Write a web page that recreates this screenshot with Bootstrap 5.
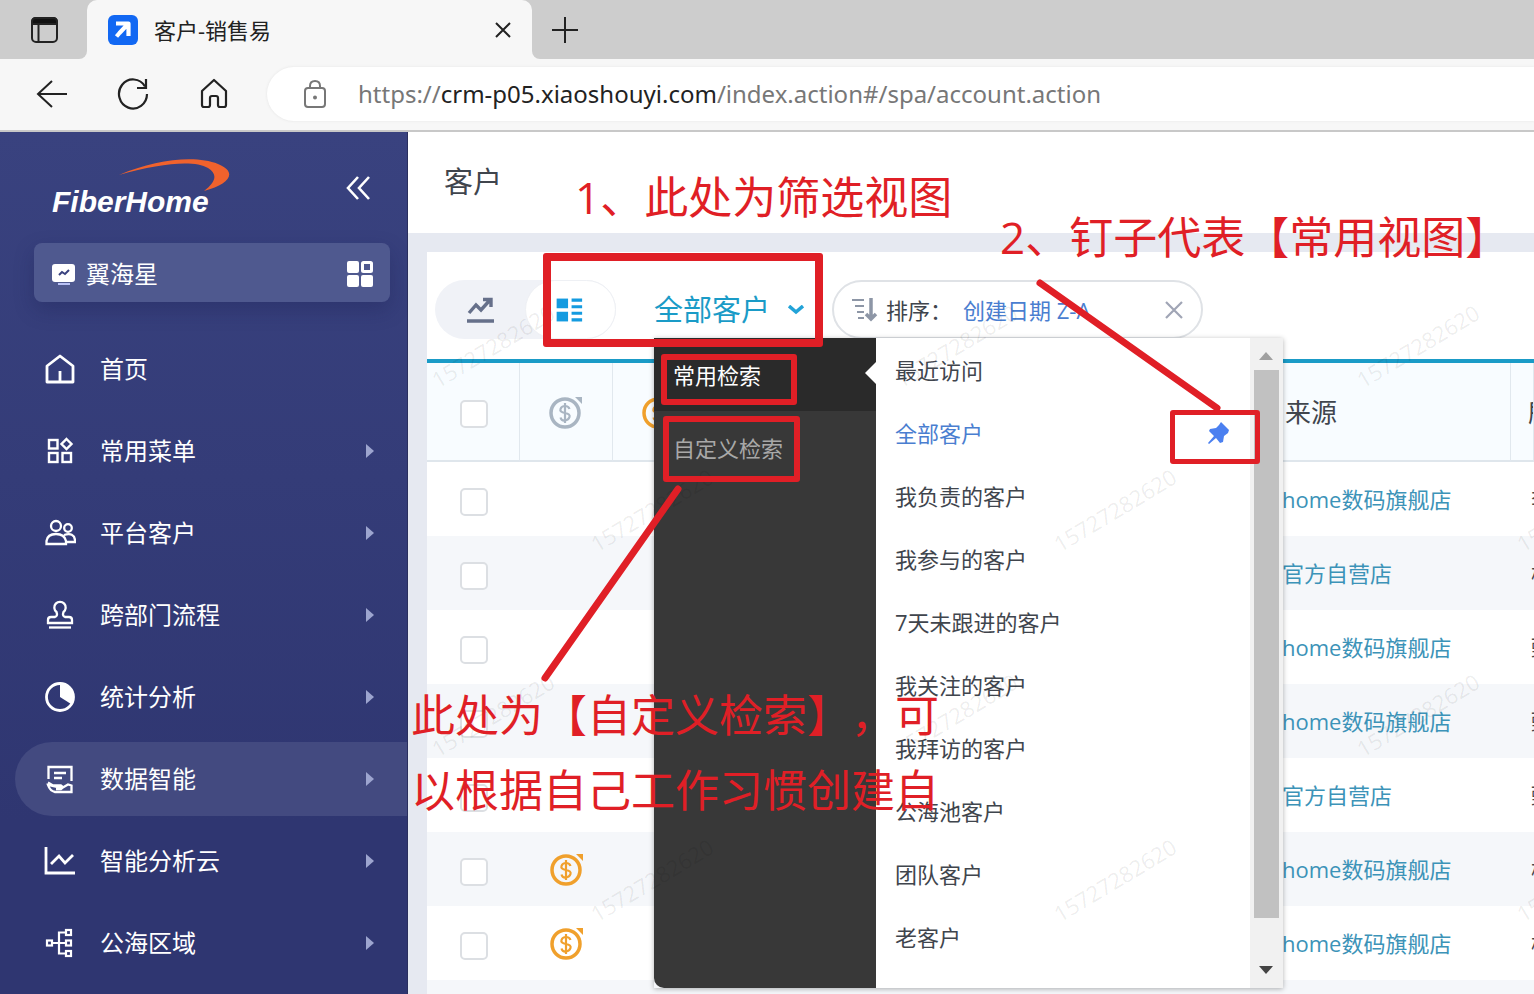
<!DOCTYPE html>
<html lang="zh-CN">
<head>
<meta charset="utf-8">
<meta name="viewport" content="width=device-width, initial-scale=1">
<title>客户-销售易</title>
<link href="https://cdn.jsdelivr.net/npm/bootstrap@5.3.0/dist/css/bootstrap.min.css" rel="stylesheet">
<style>
:root{--red:#e01f26;--teal:#1a9bc7;--ink:#40454d}
body{font-family:"Open Sans","Noto Sans CJK SC",sans-serif;font-size:22px;line-height:32px;color:var(--ink);background:#f7f7f7}
svg{display:block;flex:none}
.icon-btn{border:0;background:none;padding:0;color:#222}
/* browser frame */
.tabstrip{height:59px;background:#f7f7f7}
.tab-side{width:87px;background:#cdcdcd;border-bottom-right-radius:8px}
.tab-rest{background:#cdcdcd;border-bottom-left-radius:8px;padding-left:20px}
.tab-holder{background:#cdcdcd linear-gradient(#cdcdcd 50%,#f7f7f7 50%)}
.tab-page{width:445px;background:#f7f7f7;border-radius:10px 10px 0 0;padding:0 20px;height:59px;color:#222}
.addressbar{height:73px;padding:8px 0 9px 35px;background:#f7f7f7;border-bottom:2px solid #c8c8c8}
.nav-tools{gap:48px;width:232px}
.url-pill{background:#fff;border-radius:28px 0 0 28px;box-shadow:0 0 3px #e4e4e4;padding-left:35px;gap:30px}
.url-text{font-family:"Noto Sans",sans-serif;font-size:24px;color:#777;white-space:nowrap}
.url-text b{font-weight:400;color:#222}
/* sidebar */
.sidebar{width:408px;background:linear-gradient(#39427f,#2f3671 80%);color:#fff;border-right:1px solid #2a2f5e}
.brand-row{height:111px;padding:20px 36px 0 52px}
.brand-name{font:italic bold 30px/40px "Liberation Sans Narrow","Liberation Sans",sans-serif;color:#fff;padding-top:30px}
.brand-arc{position:absolute;left:64px;top:4px}
.app-switch{margin:0 17px 0 34px;height:59px;border-radius:8px;background:#4f598f;box-shadow:0 8px 20px rgba(20,25,70,.25);padding:2px 16px 0 18px;font-size:24px;gap:10px}
.side-nav{margin-top:30px;padding-left:15px;gap:8px}
.side-nav a{height:74px;border-radius:37px 0 0 37px;padding:0 33px 0 29px;gap:24px;font-size:24px;color:#fff;text-decoration:none}
.side-nav a.active{background:#434a80}
.side-nav .caret{margin-left:auto}
/* content */
.content-area{background:#e6e9f1}
.page-head{height:101px;background:#fff;padding:0 36px}
.page-head h1{font-size:29px;font-weight:400;margin:0;line-height:100px}
.panel{margin:19px 0 0 19px;background:#fff}
.tools{height:107px;padding:28px 8px 20px}
.view-toggle{height:59px;width:181px;border-radius:30px;background:#f0f2f7}
.view-toggle button{width:90px}
.view-toggle .on{background:#fff;border:1px solid #eef0f4;border-radius:30px;width:91px}
.view-name{font-size:29px;color:var(--teal);margin-left:38px;gap:14px;width:178px}
.sort-pill{height:59px;border:2px solid #dfe2e6;border-radius:30px;width:371px;padding:0 18px;white-space:nowrap}
.sort-pill .key{color:#4a7ed0;margin-left:11px}
.grid-table{table-layout:fixed;width:100%;border-top:4px solid var(--teal);border-collapse:separate;border-spacing:0;margin:0}
.grid-table th{height:99px;background:#f8fcff;border-bottom:2px solid #dfe6ec;border-right:1px solid #e1e8ee;font-weight:400;font-size:26px;padding:0;white-space:nowrap;overflow:hidden}
.grid-table td{height:74px;padding:0;white-space:nowrap;overflow:hidden}
.grid-table tbody tr:nth-child(even){background:#f5f7fa}
.grid-table th.src{padding-left:18px}
.grid-table td.src{padding-left:15px}
.grid-table .src a{color:#3c93b8;text-decoration:none}
.grid-table th.own{padding-left:17px}
.grid-table td.own{padding-left:20px}
.grid-table svg{margin:0 auto}
.grid-table .form-check-input{width:28px;height:28px;margin:0 0 0 1px;border:2px solid #dcdfe3;border-radius:5px;display:inline-block;vertical-align:middle;background-color:#fff}
/* view menu */
.view-menu{position:absolute;left:246px;top:206px;width:629px;height:650px;box-shadow:0 1px 5px rgba(0,0,0,.3)}
.menu-kinds{width:222px;background:#383838;border-radius:0 0 0 10px}
.menu-kinds button{height:73px;border:0;background:none;color:#a8a8a8;text-align:left;padding:0 20px 0 19px}
.menu-kinds button.active{background:#2a2a2a;color:#fff}
.menu-kinds .notch{position:absolute;left:211px;top:24px}
.menu-views{background:#fff}
.menu-views a{height:63px;padding:0 20px 0 19px;color:var(--ink);text-decoration:none}
.menu-views a.active{color:#4a7ed0}
.menu-scroll{width:33px;background:#f1f1f1;padding:14px 4px 14px 3px}
.menu-scroll .thumb{background:#c1c1c1;height:548px;width:25px;margin-top:10px}
/* notes over the page */
.marks{position:absolute;left:0;top:0;width:100%;height:100%;pointer-events:none}
.note{position:absolute;color:var(--red);font:400 44px/75px "Open Sans","Noto Sans CJK SC",sans-serif;text-spacing-trim:space-all;font-kerning:none;white-space:nowrap;margin:0}
.frame-mark{position:absolute;border:6px solid var(--red);border-radius:3px;pointer-events:none}
</style>
</head>
<body>
<div class="d-flex flex-column vh-100 overflow-hidden">
  <header>
    <div class="tabstrip d-flex">
      <div class="tab-side d-flex align-items-center justify-content-center">
        <button class="icon-btn" aria-label="标签页操作"><svg width="30" height="30" viewBox="0 0 30 30" fill="none" stroke="#222" stroke-width="2"><rect x="3" y="3" width="25" height="24" rx="4"/><path d="M3 9V7q0-4 4-4h17q4 0 4 4v2z" fill="#111"/><path d="M9.500 9v18"/></svg></button>
      </div>
      <div class="tab-holder">
        <div class="tab-page d-flex align-items-center">
          <svg width="31" height="31" viewBox="0 0 31 31"><rect x="1" y="1" width="30" height="30" rx="6" fill="#1268f3"/><path d="M9 9.500h12.500V22M20.500 10.500l-8 8.500v0l-3 3.500" fill="none" stroke="#fff" stroke-width="4.200" stroke-linejoin="round"/></svg>
          <span class="ms-3">客户-销售易</span>
          <button class="icon-btn ms-auto" aria-label="关闭"><svg width="18" height="18" viewBox="0 0 18 18" stroke="#222" stroke-width="2"><path d="M2 2l14 14M16 2L2 16"/></svg></button>
        </div>
      </div>
      <div class="tab-rest flex-grow-1 d-flex align-items-center">
        <button class="icon-btn" aria-label="新标签页"><svg width="26" height="28" viewBox="0 0 26 28" stroke="#222" stroke-width="2"><path d="M13 1v26M0 14h26"/></svg></button>
      </div>
    </div>
    <div class="addressbar d-flex">
      <div class="nav-tools d-flex align-items-center">
        <button class="icon-btn" aria-label="返回"><svg width="33" height="34" viewBox="0 0 33 34" fill="none" stroke="#222" stroke-width="2"><path d="M17 4L3 17l14 13M3 17h29"/></svg></button>
        <button class="icon-btn" aria-label="刷新"><svg width="34" height="34" viewBox="0 0 34 34" fill="none" stroke="#222" stroke-width="2.200"><path d="M29 9.500A14 14.500 0 1 0 31 17"/><path d="M30 2v9h-9"/></svg></button>
        <button class="icon-btn" aria-label="主页"><svg width="32" height="34" viewBox="0 0 32 34" fill="none" stroke="#222" stroke-width="2.200" stroke-linejoin="round"><path d="M4 14L16 3l12 11v14q0 2-2 2h-4q-2 0-2-2v-7q0-2-2-2h-4q-2 0-2 2v7q0 2-2 2H6q-2 0-2-2z"/></svg></button>
      </div>
      <div class="url-pill d-flex align-items-center flex-grow-1">
        <svg width="26" height="32" viewBox="0 0 26 32" fill="none" stroke="#777" stroke-width="2"><rect x="3" y="10" width="20" height="19" rx="3"/><path d="M8 10V8q0-5 5-5t5 5v2"/><circle cx="13" cy="19.500" r="1" fill="#777"/></svg>
        <div class="url-text">https://<b>crm-p05.xiaoshouyi.com</b>/index.action#/spa/account.action</div>
      </div>
    </div>
  </header>

  <div class="d-flex flex-grow-1 overflow-hidden">
    <aside class="sidebar flex-shrink-0">
      <div class="brand-row d-flex justify-content-between">
        <div class="position-relative">
          <div class="brand-name">FiberHome</div>
          <svg class="brand-arc" width="116" height="40" viewBox="0 0 116 40"><path d="M3 19C40 3 80-1 102 8c20 8 12 20-14 27 12-9 14-17 4-23C78 4 45 7 3 19z" fill="#f0622d"/></svg>
        </div>
        <button class="icon-btn align-self-start mt-4" aria-label="收起菜单"><svg width="26" height="24" viewBox="0 0 26 24" fill="none" stroke="#fff" stroke-width="2.600"><path d="M13 1L3 12l10 11M24 1L14 12l10 11"/></svg></button>
      </div>
      <div class="app-switch d-flex align-items-center">
        <svg width="24" height="24" viewBox="0 0 24 24"><rect x="0" y="2" width="23" height="18" rx="3" fill="#fff"/><rect x="6" y="21" width="12" height="2" fill="#b9c1f5"/><path d="M7 13l3-3 3 2 4-4" fill="none" stroke="#39427f" stroke-width="2"/></svg>
        <span>翼海星</span>
        <button class="icon-btn ms-auto" aria-label="应用"><svg width="28" height="26" viewBox="0 0 28 26" fill="#fff"><rect x="1" y="0" width="12" height="12" rx="2"/><rect x="1" y="14" width="12" height="12" rx="2"/><rect x="15" y="14" width="12" height="12" rx="2"/><rect x="16.500" y="1.500" width="9" height="9" rx="1" fill="none" stroke="#fff" stroke-width="3"/></svg></button>
      </div>
      <nav class="side-nav d-flex flex-column">
        <a href="#" class="d-flex align-items-center"><svg width="32" height="32" viewBox="0 0 32 32" fill="none" stroke="#fff" stroke-width="2.800" stroke-linejoin="round"><path d="M3 13L16 3l13 10v16H3z"/><path d="M16 18v11"/></svg><span>首页</span></a>
        <a href="#" class="d-flex align-items-center"><svg width="32" height="32" viewBox="0 0 32 32" fill="none" stroke="#fff" stroke-width="2.400"><rect x="5" y="5" width="8.500" height="8.500"/><rect x="5" y="18" width="8.500" height="9"/><rect x="18.500" y="18" width="8.500" height="9"/><path d="M22.500 4l5 5-5 5-5-5z"/></svg><span>常用菜单</span><svg class="caret" width="8" height="14" viewBox="0 0 8 14" fill="#9da5cf"><path d="M0 0l8 7-8 7z"/></svg></a>
        <a href="#" class="d-flex align-items-center"><svg width="32" height="32" viewBox="0 0 32 32" fill="none" stroke="#fff" stroke-width="2.300"><circle cx="12" cy="9" r="5"/><circle cx="24" cy="11" r="3.800"/><path d="M2.500 27v-3q1-7 9.500-7t10 7v3zM20 18q10-3 11 5v2h-9"/></svg><span>平台客户</span><svg class="caret" width="8" height="14" viewBox="0 0 8 14" fill="#9da5cf"><path d="M0 0l8 7-8 7z"/></svg></a>
        <a href="#" class="d-flex align-items-center"><svg width="32" height="32" viewBox="0 0 32 32" fill="none" stroke="#fff" stroke-width="2.300"><path d="M4 24v-3q0-3 3-3h4q3-1 1.500-5A5.700 5.700 0 1 1 19.500 13q-1.500 4 1.500 5h4q3 0 3 3v3z"/><path d="M5 28.500h22"/></svg><span>跨部门流程</span><svg class="caret" width="8" height="14" viewBox="0 0 8 14" fill="#9da5cf"><path d="M0 0l8 7-8 7z"/></svg></a>
        <a href="#" class="d-flex align-items-center"><svg width="32" height="32" viewBox="0 0 32 32" fill="none" stroke="#fff" stroke-width="2.800"><circle cx="16" cy="16" r="13.500"/><path d="M16 3v13l11 7q5-9-1-16-4-4-10-4z" fill="#fff" stroke="none"/></svg><span>统计分析</span><svg class="caret" width="8" height="14" viewBox="0 0 8 14" fill="#9da5cf"><path d="M0 0l8 7-8 7z"/></svg></a>
        <a href="#" class="active d-flex align-items-center"><svg width="32" height="32" viewBox="0 0 32 32" fill="none" stroke="#fff" stroke-width="2.300"><path d="M4.500 16V4h23v14M10 10h12M10 15h8"/><path d="M4 19.500l5 3h8q3 1.500 0 3.500h-5M18 25l6-3.500 3.500 1V29H11q-5-1-7-7z"/></svg><span>数据智能</span><svg class="caret" width="8" height="14" viewBox="0 0 8 14" fill="#9da5cf"><path d="M0 0l8 7-8 7z"/></svg></a>
        <a href="#" class="d-flex align-items-center"><svg width="32" height="32" viewBox="0 0 32 32" fill="none" stroke="#fff" stroke-width="2.800"><path d="M2 2v26h29M7 19l8-8 6 7 8-8"/></svg><span>智能分析云</span><svg class="caret" width="8" height="14" viewBox="0 0 8 14" fill="#9da5cf"><path d="M0 0l8 7-8 7z"/></svg></a>
        <a href="#" class="d-flex align-items-center"><svg width="32" height="32" viewBox="0 0 32 32" fill="none" stroke="#fff" stroke-width="2.200"><rect x="3" y="13.500" width="5" height="5"/><rect x="22" y="3" width="5" height="5"/><rect x="22" y="13.500" width="5" height="5"/><rect x="22" y="24" width="5" height="5"/><path d="M8 16h14M22 5.500h-7v21h7"/></svg><span>公海区域</span><svg class="caret" width="8" height="14" viewBox="0 0 8 14" fill="#9da5cf"><path d="M0 0l8 7-8 7z"/></svg></a>
      </nav>
    </aside>

    <main class="content-area flex-grow-1 position-relative overflow-hidden">
      <div class="page-head"><h1>客户</h1></div>
      <section class="panel">
        <div class="tools d-flex">
          <div class="view-toggle d-flex">
            <button class="icon-btn d-flex align-items-center justify-content-center" aria-label="图表视图"><svg width="28" height="26" viewBox="0 0 28 26" fill="none" stroke="#66708a" stroke-width="3.400"><path d="M3 16l7-8 5 5 9-10M17 2.500h8V10M1 24h27"/></svg></button>
            <button class="icon-btn on d-flex align-items-center" aria-label="列表视图"><svg class="ms-4 ps-1" width="33" height="26" viewBox="0 0 33 26" fill="#149be0"><rect x="3" width="13" height="11"/><rect x="3" y="15" width="13" height="11"/><path d="M20 0h12v3.500H20zM20 7.500h12V11H20zM20 15h12v3.500H20zM20 22.500h12V26H20z"/></svg></button>
          </div>
          <button class="icon-btn view-name d-flex align-items-center">全部客户 <svg class="ms-1" width="16" height="10" viewBox="0 0 16 10" fill="none" stroke="#22a3d8" stroke-width="3.500"><path d="M1 1l7 6 7-6"/></svg></button>
          <div class="sort-pill d-flex align-items-center">
            <svg width="26" height="26" viewBox="0 0 26 26" fill="none" stroke="#8d96a6" stroke-width="2"><path d="M0 3h12M3 9h9M5 15h7M6 21h6"/><path d="M19 1v20M14 17l5 5 5-5" stroke-width="3.500"/></svg>
            <span class="ms-2">排序：</span><a href="#" class="key text-decoration-none">创建日期 Z-A</a>
            <button class="icon-btn ms-auto" aria-label="清除排序"><svg width="18" height="18" viewBox="0 0 18 18" stroke="#a0a5b5" stroke-width="2.200"><path d="M1 1l16 16M17 1L1 17"/></svg></button>
          </div>
        </div>
        <table class="grid-table">
          <colgroup><col style="width:93px"><col style="width:93px"><col style="width:93px"><col><col style="width:244px"><col style="width:23px"></colgroup>
          <thead><tr>
            <th class="text-center"><input class="form-check-input" type="checkbox" aria-label="全选"></th>
            <th><svg width="34" height="34" viewBox="0 0 34 34"><use href="#coin" color="#a9b5c2"/></svg></th>
            <th><svg width="34" height="34" viewBox="0 0 34 34"><use href="#coin" color="#f0a02c"/></svg></th>
            <th></th><th class="src">来源</th><th class="own">所</th>
          </tr></thead>
          <tbody>
            <tr><td class="text-center"><input class="form-check-input" type="checkbox" aria-label="选择第1行"></td><td></td><td></td><td></td><td class="src"><a href="#">home数码旗舰店</a></td><td class="own">李</td></tr>
            <tr><td class="text-center"><input class="form-check-input" type="checkbox" aria-label="选择第2行"></td><td></td><td></td><td></td><td class="src"><a href="#">官方自营店</a></td><td class="own">杨</td></tr>
            <tr><td class="text-center"><input class="form-check-input" type="checkbox" aria-label="选择第3行"></td><td></td><td></td><td></td><td class="src"><a href="#">home数码旗舰店</a></td><td class="own">甄</td></tr>
            <tr><td class="text-center"><input class="form-check-input" type="checkbox" aria-label="选择第4行"></td><td></td><td></td><td></td><td class="src"><a href="#">home数码旗舰店</a></td><td class="own">甄</td></tr>
            <tr><td class="text-center"><input class="form-check-input" type="checkbox" aria-label="选择第5行"></td><td></td><td></td><td></td><td class="src"><a href="#">官方自营店</a></td><td class="own">甄</td></tr>
            <tr><td class="text-center"><input class="form-check-input" type="checkbox" aria-label="选择第6行"></td><td><svg width="34" height="34" viewBox="0 0 34 34"><use href="#coin" color="#f0a02c"/></svg></td><td></td><td></td><td class="src"><a href="#">home数码旗舰店</a></td><td class="own">杨</td></tr>
            <tr><td class="text-center"><input class="form-check-input" type="checkbox" aria-label="选择第7行"></td><td><svg width="34" height="34" viewBox="0 0 34 34"><use href="#coin" color="#f0a02c"/></svg></td><td></td><td></td><td class="src"><a href="#">home数码旗舰店</a></td><td class="own">杨</td></tr>
            <tr><td></td><td></td><td></td><td></td><td></td><td></td></tr>
          </tbody>
        </table>
      </section>

      <div class="view-menu d-flex">
        <div class="menu-kinds d-flex flex-column">
          <button class="active">常用检索</button>
          <button>自定义检索</button>
          <svg class="notch" width="11" height="22" viewBox="0 0 11 22"><path d="M11 0L0 11l11 11z" fill="#fff"/></svg>
        </div>
        <nav class="menu-views flex-grow-1">
          <a href="#" class="d-flex align-items-center">最近访问</a>
          <a href="#" class="active d-flex align-items-center justify-content-between">全部客户<svg width="24" height="24" viewBox="0 0 24 24" fill="#4b80f0"><path d="M15 1l8 8-1 3-4 3-1 6-3 1-4-5-7 6-1-1 6-7-5-5 1-2 6-1 3-3z"/></svg></a>
          <a href="#" class="d-flex align-items-center">我负责的客户</a>
          <a href="#" class="d-flex align-items-center">我参与的客户</a>
          <a href="#" class="d-flex align-items-center">7天未跟进的客户</a>
          <a href="#" class="d-flex align-items-center">我关注的客户</a>
          <a href="#" class="d-flex align-items-center">我拜访的客户</a>
          <a href="#" class="d-flex align-items-center">公海池客户</a>
          <a href="#" class="d-flex align-items-center">团队客户</a>
          <a href="#" class="d-flex align-items-center">老客户</a>
        </nav>
        <div class="menu-scroll d-flex flex-column align-items-center">
          <svg width="14" height="8" viewBox="0 0 14 8" fill="#a0a0a0"><path d="M0 8l7-8 7 8z"/></svg>
          <div class="thumb mb-auto"></div>
          <svg width="14" height="8" viewBox="0 0 14 8" fill="#444"><path d="M0 0h14L7 8z"/></svg>
        </div>
      </div>

      <svg class="marks" aria-hidden="true">
        <g font-family="Open Sans, sans-serif" font-size="22" font-weight="500" fill="#000" fill-opacity=".08">
          <text transform="translate(30 257) rotate(-31)">15727282620</text>
          <text transform="translate(493 257) rotate(-31)">15727282620</text>
          <text transform="translate(955 257) rotate(-31)">15727282620</text>
          <text transform="translate(189 421) rotate(-31)">15727282620</text>
          <text transform="translate(652 421) rotate(-31)">15727282620</text>
          <text transform="translate(1115 421) rotate(-31)">15727282620</text>
          <text transform="translate(30 626) rotate(-31)">15727282620</text>
          <text transform="translate(493 626) rotate(-31)">15727282620</text>
          <text transform="translate(955 626) rotate(-31)">15727282620</text>
          <text transform="translate(189 791) rotate(-31)">15727282620</text>
          <text transform="translate(652 791) rotate(-31)">15727282620</text>
          <text transform="translate(1115 791) rotate(-31)">15727282620</text>
        </g>
        <g stroke="#e01f26" stroke-width="7" stroke-linecap="round"><path d="M632 151L809 276M270 357L137 546"/></g>
      </svg>
      <div class="frame-mark" style="left:135px;top:121px;width:280px;height:94px;border-width:8px"></div>
      <div class="frame-mark" style="left:253px;top:222px;width:136px;height:51px"></div>
      <div class="frame-mark" style="left:255px;top:284px;width:137px;height:66px"></div>
      <div class="frame-mark" style="left:762px;top:278px;width:90px;height:54px;border-width:5px"></div>
      <p class="note" style="left:167px;top:28px">1、此处为筛选视图</p>
      <p class="note" style="left:592px;top:68px">2、钉子代表【常用视图】</p>
      <p class="note" style="left:3px;top:546px">此处为【自定义检索】，可<br>以根据自己工作习惯创建自</p>
    </main>
  </div>
</div>
<svg width="0" height="0" class="position-absolute" aria-hidden="true"><defs>
  <g id="coin"><circle cx="16" cy="18" r="14" fill="none" stroke="currentColor" stroke-width="3.500"/><path d="M26 2h7v7z" fill="currentColor"/><path d="M20.500 14q-1-3-4.500-3t-4.500 3 4.500 4 4.500 4-4.500 3.500-4.500-3M16 8v20" fill="none" stroke="currentColor" stroke-width="2.200"/></g>
</defs></svg>
<script src="https://cdn.jsdelivr.net/npm/bootstrap@5.3.0/dist/js/bootstrap.bundle.min.js"></script>
</body>
</html>
